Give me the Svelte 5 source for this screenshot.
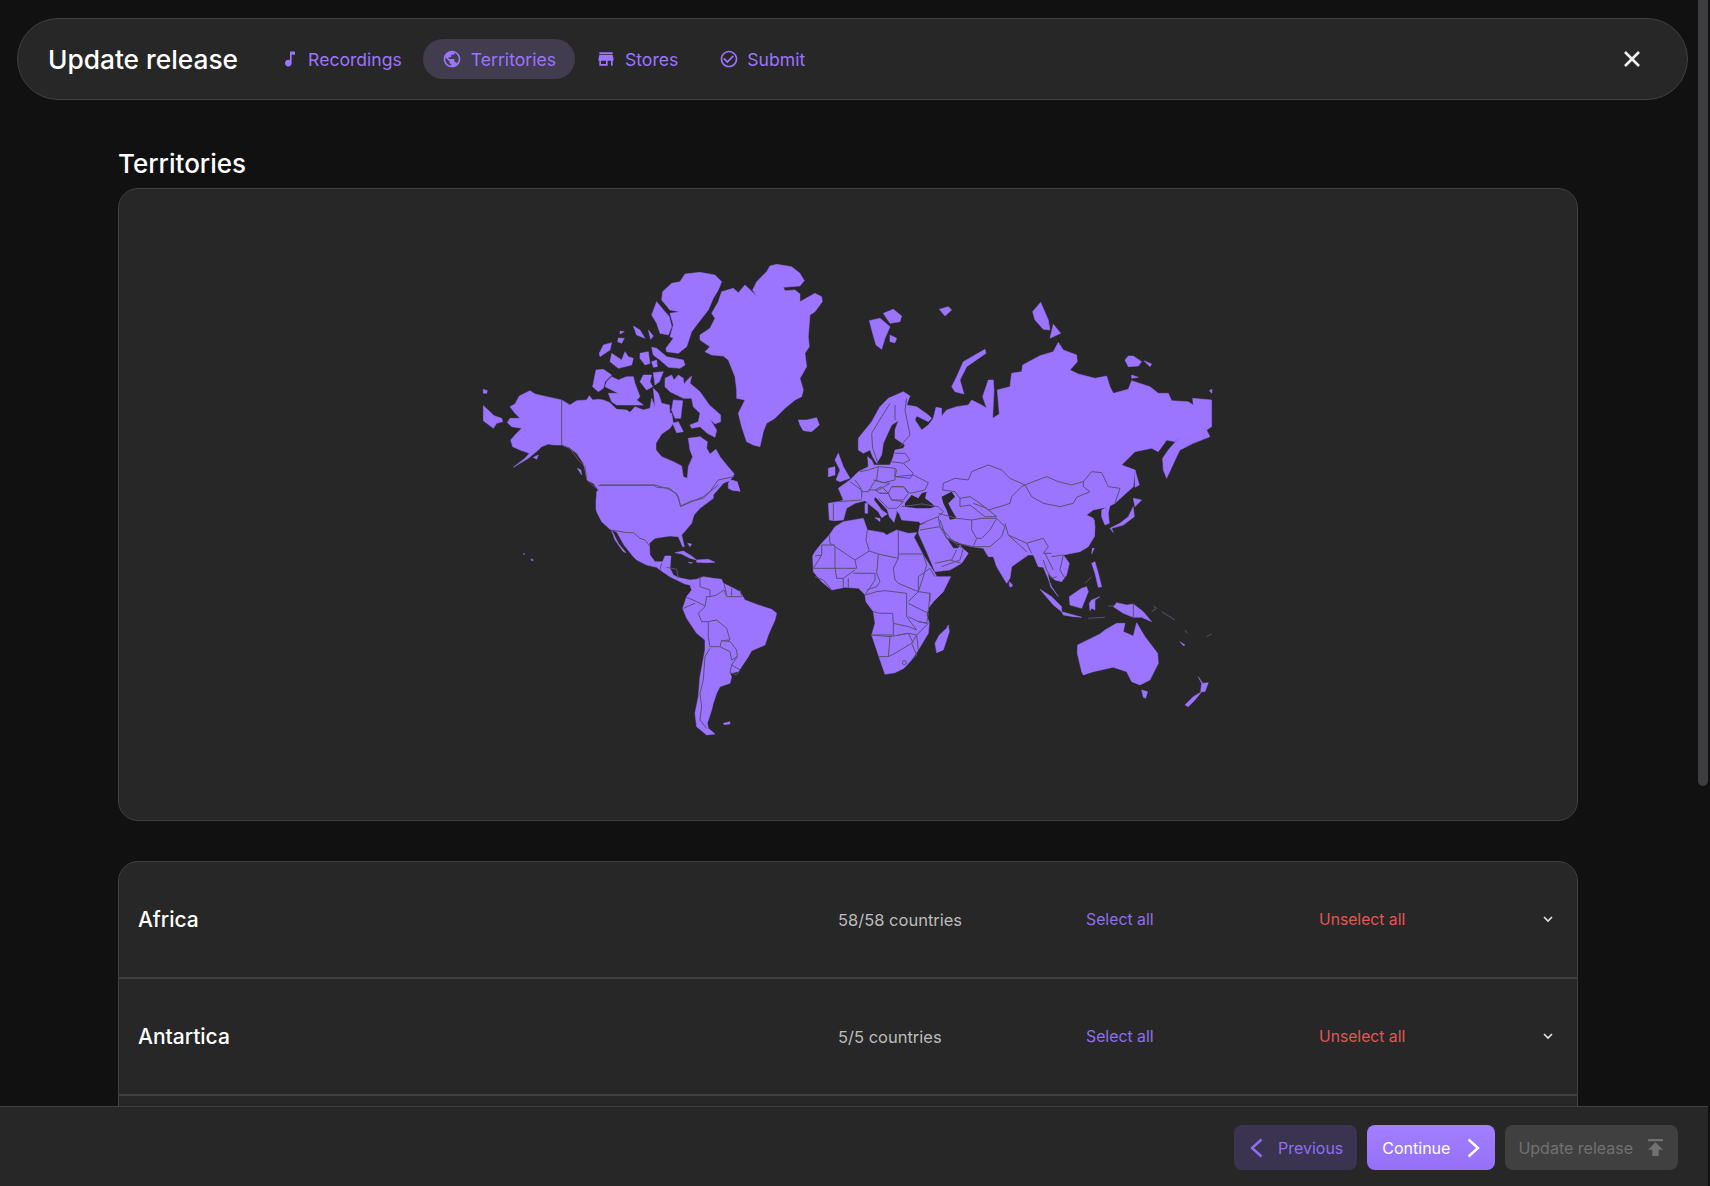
<script>
	// map is traced from the layout in page px; each layer has its own origin, coordinates are 3x
	const layers = [
		{
			x: 470, y: 250,
			land: [
				'120,470 135,462 148,438 180,422 195,432 230,440 275,450 300,465 320,452 350,450 358,437 368,450 385,448 400,450 420,458 440,478 470,480 480,487 495,470 520,480 540,475 545,445 555,470 550,415 565,430 575,460 598,465 600,490 605,490 610,520 600,535 575,552 558,580 558,600 575,620 610,635 635,648 640,680 652,685 655,650 668,620 660,600 655,565 690,560 712,575 710,595 720,612 738,598 750,620 770,645 793,672 780,692 762,698 740,705 722,722 705,738 700,760 680,780 378,780 380,725 385,720 370,700 352,690 345,660 340,640 320,610 300,595 275,585 250,585 235,582 215,590 205,600 175,625 130,652 165,625 178,610 150,600 128,590 122,570 140,550 155,535 125,530 112,518 120,505 150,505 135,490',
				'40,418 52,422 50,430 40,430',
				'40,467 60,485 72,497 95,505 98,515 80,520 70,535 40,512',
				'775,700 790,690 800,700 810,722 790,722 775,715',
				'578,125 605,100 630,95 645,72 690,67 735,75 755,95 745,120 730,145 715,180 680,225 665,245 650,290 625,310 590,305 588,295 610,265 600,260 610,225 600,190 630,185 600,180 575,150',
				'560,155 585,185 598,200 605,230 595,255 570,250 560,220 545,195',
				'545,292 560,295 590,320 640,330 645,345 630,355 595,352 570,330 550,315',
				'490,228 510,240 525,265 500,255',
				'535,240 550,258 542,268',
				'450,243 463,245 450,252',
				'445,264 463,265 455,280 443,275',
				'400,285 425,278 420,300 390,320 388,310',
				'425,310 455,330 465,305 475,320 490,325 485,345 445,355 420,335',
				'510,310 535,305 540,340 525,345 510,325',
				'545,335 560,330 562,350 550,352',
				'410,395 425,380 445,390 470,380 490,380 495,400 510,440 500,450 520,465 440,465 425,455 415,430 445,430 405,410',
				'378,360 400,358 425,375 405,395 400,415 385,425 368,410',
				'520,375 545,375 540,395 548,410 530,420 510,395',
				'550,368 580,365 568,395 555,405',
				'585,385 605,375 612,390 625,375 640,385 642,403 650,392 665,378 660,400 690,425 718,465 752,495 752,515 735,522 720,508 740,540 735,562 712,550 690,530 665,535 660,525 685,515 690,490 670,470 665,445 640,445 600,425 585,410',
				'610,450 638,452 635,480 632,505 615,505 605,480',
				'608,520 625,515 640,545 620,548',
				'848,120 860,95 890,65 900,48 920,43 965,50 990,70 1003,92 990,108 940,112 945,122 975,120 990,132 990,155 1035,130 1055,140 1057,155 1035,185 1020,195 1015,260 1018,290 1005,310 1010,350 990,385 1000,420 995,440 975,450 945,475 915,505 890,520 880,545 870,590 850,585 830,575 815,530 805,490 825,450 800,445 800,420 795,380 775,330 760,318 725,315 705,305 720,290 690,270 690,255 720,235 735,205 725,190 745,155 755,125 790,115 805,128 825,105 860,138',
				'985,510 1010,510 1040,503 1048,525 1025,545 1000,542 990,525',
				'322,655 333,660 335,675',
				'190,622 205,615 200,628'
			],
			lines: [
				'275,450 275,585 300,595 325,630 345,650 350,690 385,720',
				'385,706 552,706 560,712 600,715 625,740 632,770 665,755 700,740 720,725 745,690 793,680'
			]
		},
		{
			x: 500, y: 480,
			land: [
				'262,0 285,10 298,35 288,60 290,95 305,125 330,148 350,156 372,195 400,230 410,240 440,255 470,262 480,270 510,290 530,300 555,312 570,315 575,330 560,350 548,385 560,415 590,460 615,480 615,510 600,590 595,650 585,700 590,740 620,765 645,762 625,745 622,730 635,690 640,670 650,640 660,620 690,610 695,590 690,580 715,575 745,530 755,512 795,495 805,465 825,420 830,400 815,388 775,375 735,360 720,335 695,322 670,310 665,298 640,295 610,290 590,298 570,300 545,295 530,290 520,285 510,265 513,228 495,228 488,245 465,245 450,225 448,190 465,175 510,168 535,170 548,200 553,200 545,165 575,130 582,105 600,85 620,70 640,55 640,45 670,10 685,0',
				'335,152 345,180 370,215 378,218 355,190 340,160',
				'690,0 712,5 720,35 700,25 685,12',
				'525,218 550,213 575,228 590,240 570,235 545,222',
				'590,240 625,238 645,247 620,248 590,247',
				'565,247 578,248 572,250',
				'563,190 575,192 570,200',
				'670,730 690,725 690,732 672,734',
				'70,220 74,222 72,224',
				'93,236 100,240 96,243'
			],
			lines: [
				'300,15 465,15 500,25 530,40 542,78 570,65 610,55 630,35 655,15',
				'335,150 380,158 400,158 420,175 435,180 448,197',
				'485,250 480,270',
				'500,262 530,268 535,295',
				'600,290 600,320 630,330 630,350 620,350 615,380',
				'672,310 680,345',
				'695,325 695,350',
				'720,330 725,350',
				'630,350 650,345 672,330 680,350 725,350',
				'560,352 590,365 615,378',
				'550,385 585,370',
				'615,380 595,400 605,425 625,425 625,470 630,500',
				'625,425 650,420 680,445 690,480 665,482 660,500 630,500',
				'665,482 690,485 710,510 712,530 695,540 690,515 660,500',
				'630,505 615,530 610,600 600,640 605,680 600,720 620,745',
				'695,555 720,570 710,585 690,578 695,555',
				'712,530 695,555'
			]
		},
		{
			x: 800, y: 290,
			land: [
				'265,325 310,305 330,318 320,345 350,350 385,375 395,385 385,395 350,378 345,390 365,420 385,405 400,385 408,352 425,355 425,378 440,360 470,350 505,345 515,330 545,345 560,355 548,320 565,270 580,270 582,300 578,385 598,372 592,300 630,290 635,250 665,245 668,225 720,197 760,185 775,157 790,180 830,195 832,215 810,240 835,252 885,265 920,258 930,290 940,310 985,298 995,272 1050,290 1075,310 1105,310 1115,332 1165,335 1180,345 1178,325 1235,330 1235,410 1220,420 1230,440 1180,460 1140,480 1130,500 1100,565 1090,540 1088,505 1105,480 1140,440 1125,455 1100,450 1075,485 1055,475 1005,485 965,525 1005,540 1000,590 945,640 925,650 905,655 880,660 860,675 880,685 885,710 883,740 700,745 500,700 360,700 358,695 305,690 298,672 288,660 290,668 282,697 268,680 262,660 240,635 225,620 222,630 245,660 262,672 245,683 235,665 210,645 195,632 165,640 140,655 130,690 105,692 88,690 85,640 115,635 130,630 115,595 150,570 175,545 205,530 203,500 215,510 222,525 270,525 280,500 285,480 310,475 315,465 285,445 285,420 295,392 275,405 250,460 245,495 230,520 218,500 210,480 190,490 175,480 175,445 215,395 240,350',
				'115,490 130,530 150,565 120,575 108,570 120,540 105,510',
				'85,535 105,530 105,555 85,560',
				'208,92 240,85 270,110 255,145 245,178 228,165 218,130',
				'250,70 280,58 305,78 300,95 270,100',
				'270,135 290,145 285,158 270,155',
				'418,58 445,50 455,60 435,78',
				'555,178 558,190 500,230 480,270 492,312 465,305 455,290 470,260 490,215',
				'722,37 745,90 750,120 730,118 705,90 698,65',
				'760,103 782,130 750,145',
				'985,198 1000,198 1025,215 1015,228 985,230 975,210',
				'1032,212 1055,222 1050,230',
				'995,255 1015,262 995,265',
				'1228,302 1236,298 1236,310',
				'1005,540 1018,585 1005,592',
				'1000,625 1025,630 1005,650',
				'1000,650 1003,680 970,705 935,715 940,728 930,715 960,700 985,680',
				'905,660 930,645 925,670 928,700 915,705 905,680',
				'195,640 203,640 203,670 195,670',
				'225,683 240,685 240,695'
			],
			seas: [
				'315,640 335,615 355,625 365,610 380,605 375,625 395,640 405,650 390,655 350,655 315,650',
				'425,620 455,605 465,620 445,640 455,660 470,685 450,690 440,660 430,640'
			],
			lines: [
				'270,340 245,380 215,430 218,475 235,522',
				'285,345 285,390',
				'320,325 315,360 330,435 300,470',
				'285,490 315,490 330,510 310,520 272,515',
				'310,520 340,550 330,565 285,560 290,540 285,535',
				'285,560 340,555 385,578 375,600 330,610 310,590 275,590',
				'180,545 205,540 235,530 230,570 220,580 205,605 185,605 180,590 165,570',
				'235,530 285,535 285,570 250,578 225,570',
				'220,570 250,578 270,580 235,600 205,600',
				'275,590 310,590 325,610 310,630 275,630 265,610 275,590',
				'240,610 265,610 275,630 310,635 290,655 265,655 235,625',
				'245,590 265,610 240,610 225,600 245,590',
				'115,635 185,630',
				'100,640 100,690',
				'150,575 185,600 185,625',
				'430,580 465,565 505,570 515,545 565,525 605,540 630,565 675,585',
				'430,580 428,600 465,605 480,625 510,620 540,640 565,660 600,650 630,640 635,620 665,590 675,585',
				'675,585 700,575 740,560 775,575 815,585 850,575 875,545 905,548 925,590 960,595 945,640',
				'675,585 695,620 730,640 780,650 820,640 830,622 870,605 850,590 850,575',
				'480,625 480,650 510,645 555,680 590,680 560,655 520,640',
				'415,670 470,685 515,690 515,720 530,745 520,770 470,760 440,745 420,690',
				'515,690 545,685 590,685 570,720 545,745 530,745',
				'590,685 615,710 605,740 570,770 520,770',
				'615,700 625,735 680,760 730,745 745,770 730,790 755,790',
				'625,735 680,785',
				'680,760 695,790',
				'415,650 430,665 415,680',
				'305,650 365,642 415,650',
				'365,700 415,680 420,710 440,745',
				'360,720 420,710 470,765 490,775 480,810 425,830',
				'735,790 760,840'
			]
		},
		{
			x: 780, y: 480,
			land: [
				'148,165 165,140 190,125 250,115 262,150 310,158 320,165 350,150 385,160 410,158 402,172 430,225 465,280 470,290 512,290 490,335 460,365 445,385 440,405 448,430 445,460 415,510 395,540 372,565 345,578 315,583 295,525 275,465 285,430 280,395 258,365 255,345 235,325 195,322 155,330 125,305 100,275 98,228 105,215 125,190',
				'415,160 420,135 440,130 470,120 500,120 943,120 943,170 925,200 900,215 850,225 868,250 860,285 845,305 825,300 803,280 812,320 835,350 815,320 800,285 790,262 775,260 760,225 745,225 695,260 690,295 680,310 650,260 640,230 625,230 610,205 575,200 540,190 497,170 510,190 520,205 535,205 540,195 548,205 565,220 545,250 510,270 465,275 440,215',
				'505,435 508,455 490,510 470,518 465,490 478,465 500,445',
				'688,305 698,315 693,322 688,318',
				'780,328 815,350 845,380 845,395 820,375',
				'845,395 870,402 905,412 880,410 850,405',
				'868,350 905,325 920,320 925,335 905,385 870,375',
				'928,370 935,360 960,350 945,360 945,390 935,385 930,392',
				'935,250 945,245 955,280 965,320 955,322 945,280',
				'937,205 943,205 935,222',
				'1010,368 1040,375 1060,372 1090,395 1115,425 1085,412 1060,412 1030,400 1000,380',
				'893,495 960,462 975,450 1010,430 1035,430 1030,455 1060,468 1070,428 1095,470 1133,520 1135,550 1110,600 1080,615 1055,605 1040,575 1000,562 940,575 910,585 905,575 892,520',
				'1085,630 1103,635 1097,655 1090,652',
				'1255,590 1268,610 1285,608 1275,635 1262,635 1265,610',
				'1265,635 1245,660 1225,680 1215,675 1240,650',
				'1200,485 1215,495 1210,497'
			],
			lines: [
				'148,165 150,190 165,200 225,240',
				'262,150 258,180 268,213 295,222',
				'225,240 268,213',
				'355,150 355,235',
				'295,222 355,235',
				'355,222 430,222',
				'225,240 230,265 165,265 165,200',
				'125,195 165,195',
				'125,225 105,228',
				'125,195 125,225 100,265 165,265',
				'295,222 290,280 300,305 290,320 260,330',
				'355,235 340,265 345,300 355,310 415,335 430,290 440,255 430,225',
				'220,280 285,280 285,300 255,345 235,325',
				'165,265 170,295 190,295 225,270',
				'105,290 130,300 155,330',
				'190,295 190,322',
				'205,295 205,322',
				'415,335 415,290 450,265 465,290',
				'450,340 415,335',
				'450,340 450,365',
				'258,345 290,335 315,332 380,340 380,410 410,450 385,440 340,430 338,400 300,400 280,395',
				'385,370 445,400 440,430 415,425 385,410',
				'415,335 385,365',
				'450,340 445,395',
				'340,430 340,465 275,465',
				'275,465 330,470 325,530 295,530',
				'325,530 345,520 395,490 410,525 400,535',
				'330,470 385,460 400,490',
				'355,465 385,460 410,465 395,490',
				'415,425 445,430 410,465 415,510',
				'465,250 510,240 545,250',
				'515,240 530,210',
				'790,240 800,270 815,295 830,290',
				'815,230 850,225 840,270 855,295',
				'1060,372 1060,412',
				'1120,378 1130,385 1115,395',
				'1145,395 1185,420',
				'1280,470 1295,462',
				'1215,450 1222,460',
				'985,378 1000,378',
				'925,415 975,412',
				'915,310 935,290'
			],
			rings: [[373, 548, 6]]
		}
	];

	const nav = [
		{ label: 'Recordings', icon: 'M12 3v10.55c-.59-.34-1.27-.55-2-.55-2.21 0-4 1.79-4 4s1.79 4 4 4 4-1.79 4-4V7h4V3h-6z' },
		{ label: 'Territories', active: true, icon: 'M12 2C6.48 2 2 6.48 2 12s4.48 10 10 10 10-4.48 10-10S17.52 2 12 2zm-1 17.93c-3.95-.49-7-3.85-7-7.93 0-.62.08-1.21.21-1.79L9 15v1c0 1.1.9 2 2 2v1.93zm6.9-2.54c-.26-.81-1-1.39-1.9-1.39h-1v-3c0-.55-.45-1-1-1H8v-2h2c.55 0 1-.45 1-1V7h2c1.1 0 2-.9 2-2v-.41c2.93 1.19 5 4.06 5 7.41 0 2.08-.8 3.97-2.1 5.39z' },
		{ label: 'Stores', icon: 'M20 4H4v2h16V4zm1 10v-2l-1-5H4l-1 5v2h1v6h10v-6h4v6h2v-6h1zm-9 4H6v-4h6v4z' },
		{ label: 'Submit', icon: 'M16.59 7.58L10 14.17l-3.59-3.58L5 12l5 5 8-8zM12 2C6.48 2 2 6.48 2 12s4.48 10 10 10 10-4.48 10-10S17.52 2 12 2zm0 18c-4.42 0-8-3.58-8-8s3.58-8 8-8 8 3.58 8 8-3.58 8-8 8z' }
	];

	const regions = [
		{ name: 'Africa', count: '58/58 countries' },
		{ name: 'Antartica', count: '5/5 countries' }
	];
</script>

<div class="page">
	<header class="topbar">
		<h1>Update release</h1>
		<nav>
			{#each nav as item}
				<a class="tab" class:active={item.active} href="#top">
					<svg viewBox="0 0 24 24"><path d={item.icon} /></svg>
					{item.label}
				</a>
			{/each}
		</nav>
		<button class="close" aria-label="Close">
			<svg viewBox="0 0 18 18"><path d="M2 2l14 14M16 2L2 16" /></svg>
		</button>
	</header>

	<main>
		<h2>Territories</h2>
		<section class="card map">
			<svg viewBox="468 255 760 500" width="760" height="500">
				{#each layers as l}
					<g transform="translate({l.x} {l.y}) scale(.3333)">
						{#each l.land as p}<polygon class="land" points={p} />{/each}
						{#each l.seas ?? [] as p}<polygon class="sea" points={p} />{/each}
					</g>
				{/each}
				{#each layers as l}
					<g transform="translate({l.x} {l.y}) scale(.3333)">
						{#each l.lines as p}<polyline class="border" points={p} />{/each}
						{#each l.rings ?? [] as r}<circle class="border" cx={r[0]} cy={r[1]} r={r[2]} />{/each}
					</g>
				{/each}
			</svg>
		</section>

		<section class="card list">
			{#each regions as r}
				<div class="row">
					<span class="name">{r.name}</span>
					<span class="count">{r.count}</span>
					<span class="select">Select all</span>
					<span class="unselect">Unselect all</span>
					<svg class="chev" viewBox="0 0 10 7"><path d="M1 1l4 4 4-4" /></svg>
				</div>
			{/each}
		</section>
	</main>

	<footer>
		<button class="btn prev">
			<svg viewBox="0 0 13 20"><path d="M11.5 1.5L2 10l9.5 8.5" /></svg>
			Previous
		</button>
		<button class="btn next">
			Continue
			<svg viewBox="0 0 13 20"><path d="M1.5 1.5L11 10l-9.5 8.5" /></svg>
		</button>
		<button class="btn publish">
			Update release
			<svg viewBox="5 4 14 16"><path d="M5 4v2h14V4H5zm0 10h4v6h6v-6h4l-7-7-7 7z" /></svg>
		</button>
	</footer>

	<div class="thumb"></div>
</div>

<style>
	:global(html), :global(body) {
		margin: 0;
		background: #111;
		overflow: hidden;
	}

	.page {
		position: relative;
		height: 100vh;
		padding: 18px 22px 0 17px;
		box-sizing: border-box;
		overflow: hidden;
		font-family: Inter, 'Noto Sans', sans-serif;
		color: #fff;
	}

	.topbar {
		display: flex;
		align-items: center;
		height: 82px;
		box-sizing: border-box;
		padding: 0 46px 0 30px;
		background: #272727;
		border: 1px solid #404040;
		border-radius: 41px;
	}

	h1 {
		margin: 0 22px 0 0;
		font-size: 26.3px;
		font-weight: 500;
	}

	nav {
		display: flex;
		gap: 1.5px;
	}

	.tab {
		display: flex;
		align-items: center;
		gap: 8.5px;
		height: 40px;
		padding: 0 19.5px;
		border-radius: 20px;
		font-size: 17.6px;
		color: #9b74ff;
		text-decoration: none;
	}

	.tab.active {
		background: #413c4e;
	}

	.tab svg {
		width: 20px;
		height: 20px;
		fill: #9b74ff;
	}

	.close {
		margin-left: auto;
		padding: 0;
		width: 18px;
		height: 18px;
		background: none;
		border: 0;
	}

	.close svg {
		display: block;
		fill: none;
		stroke: #f0f0f0;
		stroke-width: 2.6;
	}

	main {
		padding: 0 110px 0 101px;
	}

	h2 {
		margin: 47px 0 8px;
		height: 33px;
		line-height: 33px;
		font-size: 26px;
		font-weight: 500;
	}

	.card {
		background: #272727;
		border: 1px solid #404040;
		border-radius: 20px;
		box-sizing: border-box;
	}

	.map {
		display: flex;
		align-items: center;
		justify-content: center;
		height: 633px;
	}

	.land {
		fill: #9b74ff;
		stroke: #9b74ff;
		stroke-width: 1.5;
		stroke-linejoin: round;
	}

	.sea {
		fill: #272727;
	}

	.border {
		fill: none;
		stroke: #59526c;
		stroke-width: 3;
		stroke-linejoin: round;
	}

	.list {
		margin-top: 40px;
		padding-bottom: 200px;
	}

	.row {
		display: grid;
		grid-template-columns: 700px 248px 233px 1fr 10px;
		align-items: center;
		height: 115px;
		padding: 0 24px 0 19px;
		border-bottom: 2px solid #404040;
		box-sizing: content-box;
	}

	.name {
		font-size: 21px;
		font-weight: 500;
	}

	.count {
		font-size: 16.5px;
		color: #bcbcbc;
	}

	.select {
		font-size: 15.8px;
		color: #8f6ff0;
	}

	.unselect {
		font-size: 15.7px;
		color: #e25656;
	}

	.chev {
		width: 10px;
		height: 7px;
		fill: none;
		stroke: #e4e4e4;
		stroke-width: 1.6;
	}

	footer {
		position: fixed;
		left: 0;
		right: 2px;
		bottom: 0;
		height: 80px;
		box-sizing: border-box;
		display: flex;
		justify-content: flex-end;
		gap: 10px;
		padding: 18px 30px 0 0;
		background: #272727;
		border-top: 1px solid #404040;
	}

	.btn {
		display: flex;
		align-items: center;
		height: 45px;
		padding: 0 15px;
		border: 0;
		border-radius: 8px;
		font: 400 16px Inter, 'Noto Sans', sans-serif;
	}

	.btn svg {
		width: 13px;
		height: 20px;
		fill: none;
		stroke: currentColor;
		stroke-width: 2.4;
	}

	.prev {
		gap: 15px;
		padding: 0 14px 0 16px;
		background: #3a3450;
		color: #8f6ff0;
	}

	.next {
		gap: 17px;
		background: linear-gradient(#a27fff, #9570f8);
		color: #fff;
	}

	.publish {
		gap: 15px;
		padding: 0 15px 0 13px;
		background: #404040;
		color: #717171;
	}

	.publish svg {
		width: 15px;
		height: 17px;
		fill: #717171;
		stroke: none;
	}

	.thumb {
		position: fixed;
		top: 0;
		right: 2px;
		width: 10px;
		height: 786px;
		background: #3d3d40;
		border-radius: 0 0 5px 5px;
	}
</style>
